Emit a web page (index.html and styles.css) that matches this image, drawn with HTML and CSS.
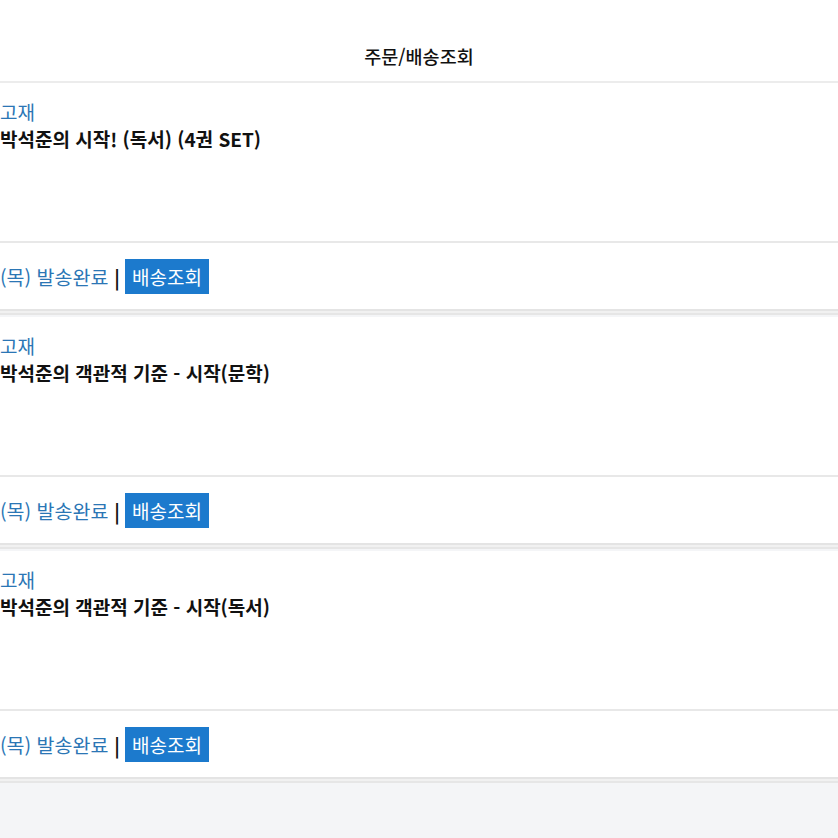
FILE: index.html
```html
<!DOCTYPE html>
<html lang="ko">
<head>
<meta charset="utf-8">
<title>주문/배송조회</title>
<link rel="stylesheet" href="styles.css">
</head>
<body>
<div class="page">
  <header class="topbar"><h1 class="title">주문/배송조회</h1></header>
  <section class="order">
    <div class="order-body">
      <div class="category">고재</div>
      <div class="product">박석준의 시작! (독서) (4권 SET)</div>
    </div>
    <div class="order-foot">
      <span class="status">(목) 발송완료</span>
      <span class="bar">|</span>
      <span class="track">배송조회</span>
    </div>
  </section>
  <section class="order">
    <div class="order-body">
      <div class="category">고재</div>
      <div class="product">박석준의 객관적 기준 - 시작(문학)</div>
    </div>
    <div class="order-foot">
      <span class="status">(목) 발송완료</span>
      <span class="bar">|</span>
      <span class="track">배송조회</span>
    </div>
  </section>
  <section class="order">
    <div class="order-body">
      <div class="category">고재</div>
      <div class="product">박석준의 객관적 기준 - 시작(독서)</div>
    </div>
    <div class="order-foot">
      <span class="status">(목) 발송완료</span>
      <span class="bar">|</span>
      <span class="track">배송조회</span>
    </div>
  </section>
</div>
</body>
</html>
```

FILE: styles.css
```css
html, body {
  margin: 0;
  padding: 0;
  background: #f4f5f7;
  font-family: "Noto Sans CJK KR", "Noto Sans", sans-serif;
}
.page {
  width: 838px;
  min-height: 838px;
  background: #f4f5f7;
  overflow: hidden;
}
.topbar {
  height: 81px;
  background: #ffffff;
  border-bottom: 2px solid #ececec;
  display: flex;
  align-items: center;
  justify-content: center;
}
.title {
  margin: 30px 0 0;
  font-size: 18.5px;
  line-height: 24px;
  font-weight: 500;
  color: #111;
}
.order {
  background: #ffffff;
  border-bottom: 2px solid #e4e4e4;
  box-shadow: 0 2px 0 #f1f1f1, 0 4px 0 #e6e6e6;
  margin-bottom: 6px;
}
.order-body {
  height: 160px;
  box-sizing: border-box;
  padding-top: 15px;
  border-bottom: 2px solid #e8e8e8;
}
.category {
  font-size: 19px;
  line-height: 27px;
  color: #2b76b5;
}
.product {
  font-size: 19px;
  line-height: 27px;
  font-weight: 700;
  color: #111;
}
.order-foot {
  height: 66px;
  display: flex;
  align-items: center;
}
.status {
  font-size: 19.5px;
  color: #2b76b5;
}
.bar {
  margin-left: 6px;
  font-size: 19px;
  font-weight: 700;
  color: #111;
}
.track {
  margin-left: 5px;
  height: 35px;
  padding: 0 7px;
  display: flex;
  align-items: center;
  background: #1c7acd;
  color: #ffffff;
  font-size: 19px;
}
```
